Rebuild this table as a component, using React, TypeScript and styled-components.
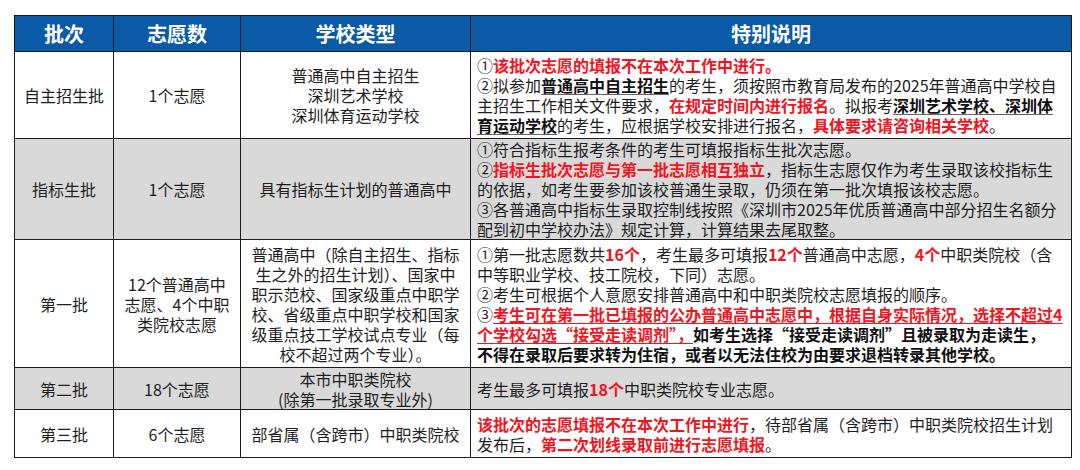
import React from 'react';
import styled, { createGlobalStyle } from 'styled-components';

const GlobalStyle = createGlobalStyle`
  html, body {
    margin: 0;
    padding: 0;
    background: #ffffff;
  }
  body {
    font-family: 'Noto Sans CJK SC', 'Noto Sans', 'Liberation Sans', sans-serif;
  }
`;

const Page = styled.div`
  width: 1080px;
  height: 470px;
  padding: 15px 0 0 14px;
  box-sizing: border-box;
  overflow: hidden;
`;

const Table = styled.table`
  border-collapse: collapse;
  table-layout: fixed;
  width: 1053px;
  color: #1e1e1e;
  font-size: 16px;
  line-height: 20px;
`;

const HeadCell = styled.th<{ $w: number }>`
  width: ${(p) => p.$w}px;
  height: 35px;
  padding: 0;
  background: #0b5aa8;
  color: #ffffff;
  font-size: 20px;
  font-weight: 700;
  border: 1.5px solid #1c1c1c;
  text-align: center;
  vertical-align: middle;
`;

const Row = styled.tr<{ $gray?: boolean; $h: number }>`
  height: ${(p) => p.$h}px;
  background: ${(p) => (p.$gray ? '#d9d9d9' : '#ffffff')};
`;

const Cell = styled.td`
  padding: 0 4px;
  border: 1.5px solid #1c1c1c;
  text-align: center;
  vertical-align: middle;
`;

const NoteCell = styled.td`
  padding: 0 6px;
  border: 1.5px solid #1c1c1c;
  text-align: left;
  vertical-align: middle;
  white-space: nowrap;
`;

const Red = styled.span<{ $line?: boolean }>`
  color: #f0141e;
  font-weight: 700;
  text-decoration: ${(p) => (p.$line ? 'underline' : 'none')};
  text-decoration-color: #f0141e;
  text-underline-offset: 2px;
`;

const Strong = styled.span<{ $line?: boolean }>`
  font-weight: 700;
  color: #111111;
  text-decoration: ${(p) => (p.$line ? 'underline' : 'none')};
  text-decoration-color: #666666;
  text-underline-offset: 2px;
`;

export default function App() {
  return (
    <>
      <GlobalStyle />
      <Page>
        <Table>
          <thead>
            <tr>
              <HeadCell $w={98}>批次</HeadCell>
              <HeadCell $w={126}>志愿数</HeadCell>
              <HeadCell $w={229}>学校类型</HeadCell>
              <HeadCell $w={600}>特别说明</HeadCell>
            </tr>
          </thead>
          <tbody>
            <Row $h={87}>
              <Cell>自主招生批</Cell>
              <Cell>1个志愿</Cell>
              <Cell>
                普通高中自主招生
                <br />
                深圳艺术学校
                <br />
                深圳体育运动学校
              </Cell>
              <NoteCell>
                ①<Red>该批次志愿的填报不在本次工作中进行。</Red>
                <br />
                ②拟参加<Strong $line>普通高中自主招生</Strong>的考生，须按照市教育局发布的2025年普通高中学校自
                <br />
                主招生工作相关文件要求，<Red>在规定时间内进行报名</Red>。拟报考
                <Strong $line>深圳艺术学校、深圳体</Strong>
                <br />
                <Strong $line>育运动学校</Strong>的考生，应根据学校安排进行报名，<Red>具体要求请咨询相关学校</Red>。
              </NoteCell>
            </Row>
            <Row $gray $h={99}>
              <Cell>指标生批</Cell>
              <Cell>1个志愿</Cell>
              <Cell>具有指标生计划的普通高中</Cell>
              <NoteCell>
                ①符合指标生报考条件的考生可填报指标生批次志愿。
                <br />
                ②<Red>指标生批次志愿与第一批志愿相互独立</Red>，指标生志愿仅作为考生录取该校指标生
                <br />
                的依据，如考生要参加该校普通生录取，仍须在第一批次填报该校志愿。
                <br />
                ③各普通高中指标生录取控制线按照《深圳市2025年优质普通高中部分招生名额分
                <br />
                配到初中学校办法》规定计算，计算结果去尾取整。
              </NoteCell>
            </Row>
            <Row $h={128}>
              <Cell>第一批</Cell>
              <Cell>
                12个普通高中
                <br />
                志愿、4个中职
                <br />
                类院校志愿
              </Cell>
              <Cell>
                普通高中（除自主招生、指标
                <br />
                生之外的招生计划）、国家中
                <br />
                职示范校、国家级重点中职学
                <br />
                校、省级重点中职学校和国家
                <br />
                级重点技工学校试点专业（每
                <br />
                校不超过两个专业）。
              </Cell>
              <NoteCell>
                ①第一批志愿数共<Red>16个</Red>，考生最多可填报<Red>12个</Red>普通高中志愿，<Red>4个</Red>中职类院校（含
                <br />
                中等职业学校、技工院校，下同）志愿。
                <br />
                ②考生可根据个人意愿安排普通高中和中职类院校志愿填报的顺序。
                <br />
                ③<Red $line>考生可在第一批已填报的公办普通高中志愿中，根据自身实际情况，选择不超过4</Red>
                <br />
                <Red $line>个学校勾选“接受走读调剂”，</Red>
                <Strong>如考生选择“接受走读调剂”且被录取为走读生，</Strong>
                <br />
                <Strong>不得在录取后要求转为住宿，或者以无法住校为由要求退档转录其他学校。</Strong>
              </NoteCell>
            </Row>
            <Row $gray $h={42}>
              <Cell>第二批</Cell>
              <Cell>18个志愿</Cell>
              <Cell>
                本市中职类院校
                <br />
                (除第一批录取专业外)
              </Cell>
              <NoteCell>
                考生最多可填报<Red>18个</Red>中职类院校专业志愿。
              </NoteCell>
            </Row>
            <Row $h={48}>
              <Cell>第三批</Cell>
              <Cell>6个志愿</Cell>
              <Cell>部省属（含跨市）中职类院校</Cell>
              <NoteCell>
                <Red>该批次的志愿填报不在本次工作中进行</Red>，待部省属（含跨市）中职类院校招生计划
                <br />
                发布后，<Red>第二次划线录取前进行志愿填报</Red>。
              </NoteCell>
            </Row>
          </tbody>
        </Table>
      </Page>
    </>
  );
}
